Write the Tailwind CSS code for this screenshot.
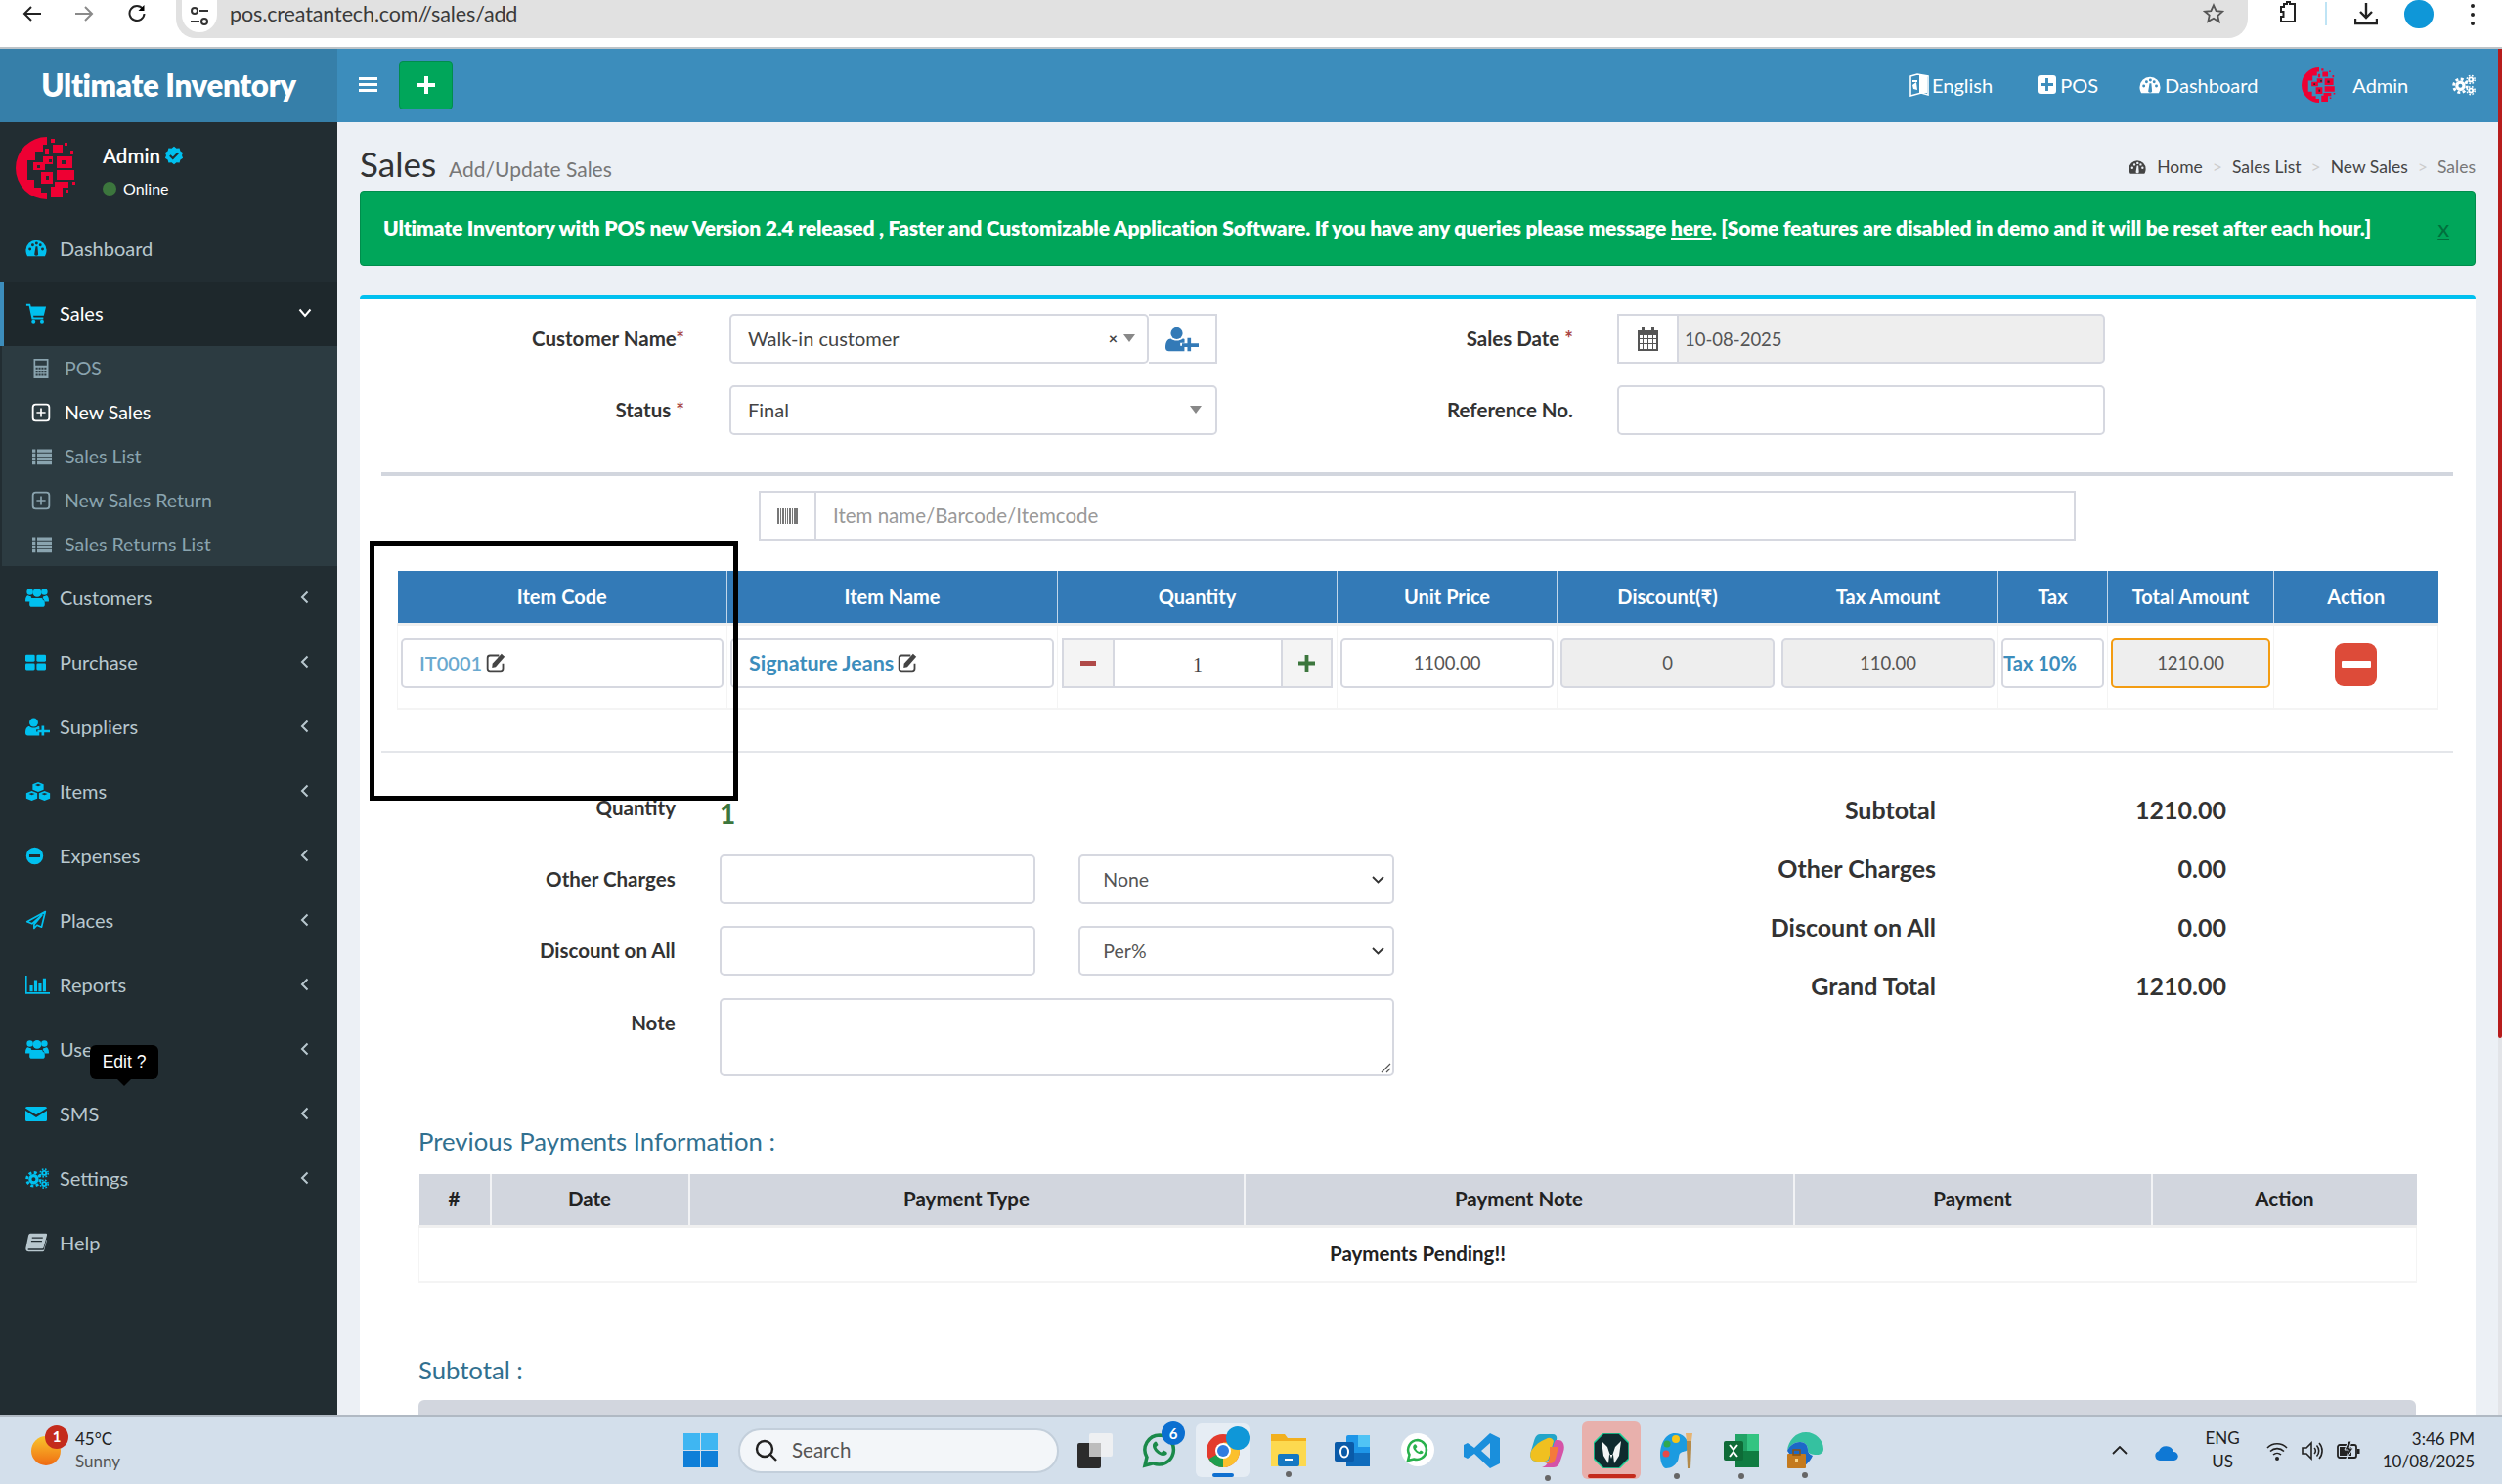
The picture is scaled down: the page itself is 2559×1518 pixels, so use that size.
<!DOCTYPE html>
<html lang="en">
<head>
<meta charset="utf-8">
<title>Sales</title>
<script src="https://cdn.jsdelivr.net/npm/@tailwindcss/browser@4"></script>
</head>
<body class="m-0 overflow-hidden bg-white font-['Lato','Noto_Sans',sans-serif] text-[#333]">
<svg class="hidden" xmlns="http://www.w3.org/2000/svg">
  <symbol id="i-dash" viewBox="0 0 24 24"><path fill-rule="evenodd" d="M12 3A11.5 11.5 0 0 0 .5 14.5c0 2.4.6 4.500 1.800 6.500h19.400c1.200-2 1.800-4.100 1.800-6.500A11.500 11.500 0 0 0 12 3zM3.500 13a1.600 1.600 0 1 0 3.200 0 1.600 1.600 0 1 0-3.200 0zM6.500 8.500a1.600 1.600 0 1 0 3.200 0 1.600 1.600 0 1 0-3.200 0zM10.800 6.500a1.600 1.600 0 1 0 3.200 0 1.600 1.600 0 1 0-3.200 0zM15 8.500a1.600 1.600 0 1 0 3.200 0 1.600 1.600 0 1 0-3.200 0zM17.500 13a1.600 1.600 0 1 0 3.200 0 1.600 1.600 0 1 0-3.200 0zM10 19a2.300 2.300 0 0 0 4.300 0L13.500 10h-2z"/></symbol>
  <symbol id="i-cart" viewBox="0 0 24 24"><path d="M1 2h4.500l.7 3H23l-2.500 10H8.800l.4 2H20v2.200H7.200L4 4.200H1z"/><circle cx="9" cy="21.500" r="2.200"/><circle cx="18.500" cy="21.500" r="2.200"/></symbol>
  <symbol id="i-calc" viewBox="0 0 24 24"><path fill-rule="evenodd" d="M3 0h18v24H3zM5 2v6h14V2zM5.500 10.500v2.500h2.500v-2.500zM9 10.500v2.500h2.500v-2.500zM12.500 10.500v2.500H15v-2.500zM16 10.500v2.500h2.500v-2.500zM5.500 14.500V17H8v-2.500zM9 14.500V17h2.500v-2.500zM12.500 14.500V17H15v-2.500zM16 14.500V17h2.500v-2.500zM5.500 18.500V21H8v-2.500zM9 18.500V21h2.500v-2.500zM12.500 18.500V21H15v-2.500zM16 18.500V21h2.500v-2.500z"/></symbol>
  <symbol id="i-plus-o" viewBox="0 0 24 24"><rect x="2" y="2" width="20" height="20" rx="3.500" fill="none" stroke="currentColor" stroke-width="2.200"/><path d="M11 6.500h2V11h4.500v2H13v4.500h-2V13H6.500v-2H11z"/></symbol>
  <symbol id="i-list" viewBox="0 0 24 24"><path d="M0 3h4v4H0zM6 3h18v4H6zM0 8h4v4H0zM6 8h18v4H6zM0 13h4v4H0zM6 13h18v4H6zM0 18h4v4H0zM6 18h18v4H6z"/></symbol>
  <symbol id="i-users" viewBox="0 0 26 22"><circle cx="5" cy="5" r="3.500"/><circle cx="21" cy="5" r="3.500"/><circle cx="13" cy="6" r="4.800"/><path d="M0 15c0-4 1.500-6 3-6 1 .8 2 1 3 1 .3 1.500 1 2.500 1.800 3C6 14 5.200 15 5 16H1.500C.5 16 0 15.600 0 15zM26 15c0-4-1.500-6-3-6-1 .8-2 1-3 1-.3 1.500-1 2.500-1.800 3 1.800 1 2.600 2 2.800 3h3.500c1 0 1.500-.4 1.500-1zM7 12h12c2 1 2.500 4 2.500 7 0 1.500-1 2.500-2.500 2.500H7c-1.500 0-2.500-1-2.500-2.500 0-3 .5-6 2.500-7z"/></symbol>
  <symbol id="i-th" viewBox="0 0 24 18"><rect x="0" y="0" width="11" height="8" rx="1.500"/><rect x="13" y="0" width="11" height="8" rx="1.500"/><rect x="0" y="10" width="11" height="8" rx="1.500"/><rect x="13" y="10" width="11" height="8" rx="1.500"/></symbol>
  <symbol id="i-userplus" viewBox="0 0 28 20"><circle cx="9.500" cy="5" r="5"/><path d="M0 17c0-5 2-7.500 4.500-7.500 1.500 1.200 3 1.700 5 1.700s3.500-.5 5-1.700c.6 0 1.100.1 1.600.4v3.100h-3.600v2.500H16V20H3c-2 0-3-1.200-3-3z"/><path d="M18.500 9h3v4.500H28v3h-6.500V20h-3v-3.500H14v-3h4.500z"/></symbol>
  <symbol id="i-cubes" viewBox="0 0 30 22"><path d="M15 0l6.500 2.600v6.500L15 11.700 8.500 9.100V2.600zM15 2.200l-3.500 1.300L15 4.900l3.500-1.400zM7.500 10.500L14 13v6.500L7.500 22 1 19.500V13zM7.500 12.700L4 14l3.500 1.400L11 14zM22.500 10.500L29 13v6.500L22.500 22 16 19.500V13zM22.500 12.700L19 14l3.500 1.400L26 14z" fill-rule="evenodd"/></symbol>
  <symbol id="i-minus" viewBox="0 0 24 24"><path fill-rule="evenodd" d="M12 1a11 11 0 1 0 0 22 11 11 0 0 0 0-22zM5 10h14v4H5z"/></symbol>
  <symbol id="i-plane" viewBox="0 0 26 24"><path d="M24 2L2 14l6 2.500L20 6 10.500 17.500v4.500l3.500-3.800 5.500 2.300z" fill="none" stroke="currentColor" stroke-width="2" stroke-linejoin="round"/></symbol>
  <symbol id="i-bars" viewBox="0 0 28 22"><path d="M0 1h1.800v19H28v2H0zM5 12h3.500v7H5zM10 6h3.500v13H10zM15 10h3.500v9H15zM20 4h3.500v15H20z"/></symbol>
  <symbol id="i-mail" viewBox="0 0 26 18"><path d="M0 2c0-1 1-2 2-2h22c1 0 2 1 2 2L13 10zM0 5l13 8 13-8v11c0 1-1 2-2 2H2c-1 0-2-1-2-2z"/></symbol>
  <symbol id="i-cogs" viewBox="0 0 30 26"><g fill="none" stroke="currentColor"><circle cx="10.500" cy="14" r="4.500" stroke-width="4"/><circle cx="10.500" cy="14" r="8.500" stroke-width="3.500" stroke-dasharray="3.700 3"/><circle cx="24" cy="6" r="2.500" stroke-width="2.400"/><circle cx="24" cy="6" r="5" stroke-width="2" stroke-dasharray="2 2"/><circle cx="24" cy="20" r="2.500" stroke-width="2.400"/><circle cx="24" cy="20" r="5" stroke-width="2" stroke-dasharray="2 2"/></g></symbol>
  <symbol id="i-book" viewBox="0 0 26 22"><path d="M6 0h19c1 0 1.300.8 1 2l-4 15c-.3 1-1 1.500-2 1.500H4c-.8 0-1.200.4-1 1 .2.500.6.800 1.500.8H21c.6 0 1-.3 1.200-.8l3.300-12 .5.500-3.500 13c-.2.600-.8 1-1.500 1H4C1.500 22 0 20 .5 17.500L3.500 3C3.800 1.200 4.800 0 6 0z"/><path fill="#222d32" d="M8 4.500h13v1.500H8zM7 8.500h13V10H7z"/></symbol>
  <symbol id="i-edit" viewBox="0 0 24 24"><path d="M16 3H5a3 3 0 0 0-3 3v13a3 3 0 0 0 3 3h13a3 3 0 0 0 3-3v-6" fill="none" stroke="currentColor" stroke-width="2.200"/><path d="M19 1l4 3.500L12 17l-4.500 1 .5-5z"/></symbol>
  <symbol id="i-avatar" viewBox="0 0 64 64"><g fill="#ee0033"><path d="M32 0A32 32 0 0 0 32 64V57H26V52H19V44H12V24H20V15H28V8H32z"/><path d="M30 12h4v6h-4zM36 2h4v4h-4zM38 8h10v9H38zM50 6h3v3h-3zM28 20h10v8H28zM42 20h16v12H42zM56 14h3v4h-3zM18 26h12v8H18zM26 36h12v12H26zM42 34h18v10H42zM40 46h14v6H40zM36 51h12v11H36zM51 54h3v3h-3zM58 46h3v3h-3z"/></g><path fill="#222d32" d="M34 23h3v3h-3zM47 24h4v4h-4zM22 29h3v3h-3zM31 40h3v4h-3z"/></symbol>
  <symbol id="i-check" viewBox="0 0 24 24"><path d="M12 1l3 2.300 3.700-.3 1 3.600 3.200 2-1.300 3.400 1.300 3.400-3.200 2-1 3.600-3.700-.3L12 23l-3-2.300-3.700.3-1-3.600-3.200-2L2.400 12 1.100 8.600l3.200-2 1-3.600L9 3.300z"/><path d="M7 12l3.500 3.500L17 9" fill="none" stroke="#222d32" stroke-width="2.500"/></symbol>
</svg>

<div class="flex h-screen w-full flex-col">
  <!-- browser bar -->
  <div class="flex h-[50px] shrink-0 items-start border-b-2 border-[#bcc3c8] bg-white">
    <svg class="ml-[23px] mt-[5px] h-[18px] w-[20px] text-[#222]" viewBox="0 0 20 18"><path d="M19 9H3M9 2L2 9l7 7" fill="none" stroke="currentColor" stroke-width="2"/></svg>
    <svg class="ml-[33px] mt-[5px] h-[18px] w-[20px] text-[#8a8a8a]" viewBox="0 0 20 18"><path d="M1 9h16M11 2l7 7-7 7" fill="none" stroke="currentColor" stroke-width="2"/></svg>
    <svg class="ml-[35px] mt-[4px] h-[20px] w-[18px] text-[#222]" viewBox="0 0 18 20"><path d="M15 5a7.500 7.500 0 1 0 1.500 5" fill="none" stroke="currentColor" stroke-width="2"/><path d="M16.500 1v6h-6z"/></svg>
    <div class="ml-[31px] flex h-[39px] w-[2119px] items-start rounded-b-[20px] bg-[#e1e1e1] pl-[6px] pr-[24px]">
      <div class="flex h-[33px] w-[36px] items-center justify-center rounded-b-full bg-white">
        <svg class="h-[22px] w-[20px]" viewBox="0 0 20 22"><g fill="none" stroke="#333" stroke-width="2"><circle cx="5" cy="5" r="3"/><circle cx="15" cy="16" r="3"/><path d="M10 5h9M1 16h9"/></g></svg>
      </div>
      <span class="ml-[13px] text-[21.500px] leading-[28px] tracking-[-.12px] text-[#3a3a3a]">pos.creatantech.com//sales/add</span>
      <svg class="ml-auto mt-[3px] h-[22px] w-[22px]" viewBox="0 0 24 24"><path d="M12 2.500l2.900 6.300 6.900.8-5.100 4.700 1.400 6.800L12 17.200l-6.100 3.400 1.400-6.800L2.200 9.600l6.900-.8z" fill="none" stroke="#555" stroke-width="2"/></svg>
    </div>
    <svg class="ml-[29px] mt-[1px] h-[24px] w-[24px]" viewBox="0 0 24 24"><path d="M8 3h3V1h3v2h5v18H5v-5h2.500v-5H5V6h3z" fill="none" stroke="#222" stroke-width="2"/></svg>
    <div class="ml-[26px] mt-[2px] h-[24px] w-[2px] bg-[#bfe4f5]"></div>
    <svg class="ml-[28px] mt-[2px] h-[24px] w-[24px]" viewBox="0 0 24 24"><path d="M12 1v15M6 10l6 6 6-6M1 17v5h22v-5" fill="none" stroke="#222" stroke-width="2.400"/></svg>
    <div class="ml-[27px] h-[29px] w-[30px] rounded-full bg-[#0f97d8]"></div>
    <div class="ml-[38px] mt-[4px] flex flex-col gap-[5px]"><i class="block h-[4px] w-[4px] rounded-full bg-[#222]"></i><i class="block h-[4px] w-[4px] rounded-full bg-[#222]"></i><i class="block h-[4px] w-[4px] rounded-full bg-[#222]"></i></div>
  </div>

  <!-- app -->
  <div class="flex min-h-0 flex-1">
    <aside class="flex w-[345px] shrink-0 flex-col bg-[#222d32] text-[20px] text-[#b8c7ce]">
      <div class="flex h-[75px] shrink-0 items-center justify-center bg-[#367fa9] text-[31.200px] font-extrabold tracking-[-.3px] text-white">Ultimate Inventory</div>
      <div class="relative flex h-[97px] shrink-0 pl-[16px] pt-[15px]">
        <svg class="h-[64px] w-[64px]"><use href="#i-avatar"/></svg>
        <div class="ml-[25px] text-white">
          <div class="mt-[6px] flex items-center gap-[4px] text-[20.500px] font-semibold leading-[26px]">Admin<svg class="h-[20px] w-[20px] text-[#00c0ef]" fill="currentColor"><use href="#i-check"/></svg></div>
          <div class="mt-[11px] flex items-center gap-[7px] text-[16px] leading-[20px]"><i class="block h-[14px] w-[14px] rounded-full bg-[#3c763d]"></i>Online</div>
        </div>
      </div>
      <div class="flex h-[66px] shrink-0 items-center pb-[2px] pl-[26px]"><svg class="h-[24px] w-[22px] text-[#00c0ef]" fill="currentColor"><use href="#i-dash"/></svg><span class="ml-[13px]">Dashboard</span></div>
      <div class="flex h-[66px] shrink-0 items-center border-l-4 border-[#3c8dbc] bg-[#1e282c] pb-[2px] pl-[22px] pr-[26px] text-white"><svg class="h-[24px] w-[22px] text-[#00c0ef]" fill="currentColor"><use href="#i-cart"/></svg><span class="ml-[13px]">Sales</span><svg class="ml-auto h-[10px] w-[14px]" viewBox="0 0 14 10"><path d="M1.500 1.500L7 8l5.500-6.500" fill="none" stroke="#fff" stroke-width="2"/></svg></div>
      <div class="flex shrink-0 flex-col border-l-2 border-[#222d32] bg-[#2c3b41] text-[19.500px] text-[#8aa4af]">
        <div class="flex h-[45px] items-center pl-[30px]"><svg class="h-[22px] w-[20px]" fill="currentColor"><use href="#i-calc"/></svg><span class="ml-[14px]">POS</span></div>
        <div class="flex h-[45px] items-center pl-[30px] text-white"><svg class="h-[20px] w-[20px]" fill="currentColor"><use href="#i-plus-o"/></svg><span class="ml-[14px]">New Sales</span></div>
        <div class="flex h-[45px] items-center pl-[30px]"><svg class="h-[20px] w-[22px]" fill="currentColor"><use href="#i-list"/></svg><span class="ml-[12px]">Sales List</span></div>
        <div class="flex h-[45px] items-center pl-[30px]"><svg class="h-[20px] w-[20px]" fill="currentColor"><use href="#i-plus-o"/></svg><span class="ml-[14px]">New Sales Return</span></div>
        <div class="flex h-[45px] items-center pl-[30px]"><svg class="h-[20px] w-[22px]" fill="currentColor"><use href="#i-list"/></svg><span class="ml-[12px]">Sales Returns List</span></div>
      </div>
      <div class="flex h-[66px] shrink-0 items-center pb-[2px] pl-[26px] pr-[29px]"><svg class="h-[22px] w-[24px] text-[#00c0ef]" fill="currentColor"><use href="#i-users"/></svg><span class="ml-[11px]">Customers</span><svg class="ml-auto h-[14px] w-[9px]" viewBox="0 0 9 14"><path d="M7.500 1.500L2 7l5.500 5.500" fill="none" stroke="#b8c7ce" stroke-width="2"/></svg></div>
      <div class="flex h-[66px] shrink-0 items-center pb-[2px] pl-[26px] pr-[29px]"><svg class="h-[17px] w-[21px] text-[#00c0ef]" fill="currentColor"><use href="#i-th"/></svg><span class="ml-[14px]">Purchase</span><svg class="ml-auto h-[14px] w-[9px]" viewBox="0 0 9 14"><path d="M7.500 1.500L2 7l5.500 5.500" fill="none" stroke="#b8c7ce" stroke-width="2"/></svg></div>
      <div class="flex h-[66px] shrink-0 items-center pb-[2px] pl-[26px] pr-[29px]"><svg class="h-[19px] w-[25px] text-[#00c0ef]" fill="currentColor"><use href="#i-userplus"/></svg><span class="ml-[10px]">Suppliers</span><svg class="ml-auto h-[14px] w-[9px]" viewBox="0 0 9 14"><path d="M7.500 1.500L2 7l5.500 5.500" fill="none" stroke="#b8c7ce" stroke-width="2"/></svg></div>
      <div class="flex h-[66px] shrink-0 items-center pb-[2px] pl-[26px] pr-[29px]"><svg class="h-[21px] w-[26px] text-[#00c0ef]" fill="currentColor"><use href="#i-cubes"/></svg><span class="ml-[9px]">Items</span><svg class="ml-auto h-[14px] w-[9px]" viewBox="0 0 9 14"><path d="M7.500 1.500L2 7l5.500 5.500" fill="none" stroke="#b8c7ce" stroke-width="2"/></svg></div>
      <div class="flex h-[66px] shrink-0 items-center pb-[2px] pl-[26px] pr-[29px]"><svg class="h-[21px] w-[19px] text-[#00c0ef]" fill="currentColor"><use href="#i-minus"/></svg><span class="ml-[16px]">Expenses</span><svg class="ml-auto h-[14px] w-[9px]" viewBox="0 0 9 14"><path d="M7.500 1.500L2 7l5.500 5.500" fill="none" stroke="#b8c7ce" stroke-width="2"/></svg></div>
      <div class="flex h-[66px] shrink-0 items-center pb-[2px] pl-[26px] pr-[29px]"><svg class="h-[22px] w-[22px] text-[#00c0ef]"><use href="#i-plane"/></svg><span class="ml-[13px]">Places</span><svg class="ml-auto h-[14px] w-[9px]" viewBox="0 0 9 14"><path d="M7.500 1.500L2 7l5.500 5.500" fill="none" stroke="#b8c7ce" stroke-width="2"/></svg></div>
      <div class="flex h-[66px] shrink-0 items-center pb-[2px] pl-[26px] pr-[29px]"><svg class="h-[20px] w-[25px] text-[#00c0ef]" fill="currentColor"><use href="#i-bars"/></svg><span class="ml-[10px]">Reports</span><svg class="ml-auto h-[14px] w-[9px]" viewBox="0 0 9 14"><path d="M7.500 1.500L2 7l5.500 5.500" fill="none" stroke="#b8c7ce" stroke-width="2"/></svg></div>
      <div class="relative flex h-[66px] shrink-0 items-center pb-[2px] pl-[26px] pr-[29px]"><svg class="h-[22px] w-[24px] text-[#00c0ef]" fill="currentColor"><use href="#i-users"/></svg><span class="ml-[11px]">Users</span><svg class="ml-auto h-[14px] w-[9px]" viewBox="0 0 9 14"><path d="M7.500 1.500L2 7l5.500 5.500" fill="none" stroke="#b8c7ce" stroke-width="2"/></svg>
        <div class="absolute left-[92px] top-[28px] flex h-[35px] w-[70px] items-center justify-center rounded-[6px] bg-black font-['Liberation_Sans',sans-serif] text-[17.500px] text-white">Edit ?<i class="absolute -bottom-[7px] left-[28px] block h-0 w-0 border-x-[7px] border-t-[7px] border-x-transparent border-t-black"></i></div>
      </div>
      <div class="flex h-[66px] shrink-0 items-center pb-[2px] pl-[26px] pr-[29px]"><svg class="h-[17px] w-[22px] text-[#00c0ef]" fill="currentColor"><use href="#i-mail"/></svg><span class="ml-[13px]">SMS</span><svg class="ml-auto h-[14px] w-[9px]" viewBox="0 0 9 14"><path d="M7.500 1.500L2 7l5.500 5.500" fill="none" stroke="#b8c7ce" stroke-width="2"/></svg></div>
      <div class="flex h-[66px] shrink-0 items-center pb-[2px] pl-[26px] pr-[29px]"><svg class="h-[21px] w-[24px] text-[#00c0ef]"><use href="#i-cogs"/></svg><span class="ml-[11px]">Settings</span><svg class="ml-auto h-[14px] w-[9px]" viewBox="0 0 9 14"><path d="M7.500 1.500L2 7l5.500 5.500" fill="none" stroke="#b8c7ce" stroke-width="2"/></svg></div>
      <div class="flex h-[66px] shrink-0 items-center pb-[2px] pl-[26px] pr-[29px]"><svg class="h-[20px] w-[22px] text-[#b8c7ce]" fill="currentColor"><use href="#i-book"/></svg><span class="ml-[13px]">Help</span></div>
    </aside>

    <div class="relative flex min-w-0 flex-1 flex-col overflow-hidden bg-[#ecf0f5]">
      <!-- navbar -->
      <header class="flex h-[75px] shrink-0 items-center bg-[#3c8dbc] pb-[2px] pl-[22px] text-[20px] text-white">
        <svg class="h-[15px] w-[19px]" viewBox="0 0 19 15"><path d="M0 0h19v3H0zM0 6h19v3H0zM0 12h19v3H0z" fill="#fff"/></svg>
        <div class="ml-[22px] flex h-[50px] w-[55px] items-center justify-center rounded-[4px] border border-[#008d4c] bg-[#00a65a]"><svg class="h-[18px] w-[18px]" viewBox="0 0 18 18"><path d="M7 0h4v7h7v4h-7v7H7v-7H0V7h7z" fill="#fff"/></svg></div>
        <svg class="ml-[1490px] h-[24px] w-[20px]" viewBox="0 0 20 24"><path d="M1 3l7-2 11 2v19l-7-2-11 3z" fill="none" stroke="#fff" stroke-width="1.600"/><path d="M10 2h8v18h-8zM3 7h5v2H3zM3 12l4-3 1 8-4-1z" fill="#fff"/></svg>
        <span class="ml-[3px]">English</span>
        <div class="ml-[46px] flex h-[19px] w-[19px] items-center justify-center rounded-[3px] bg-white"><svg class="h-[13px] w-[13px]" viewBox="0 0 18 18"><path d="M7 0h4v7h7v4h-7v7H7v-7H0V7h7z" fill="#3c8dbc"/></svg></div>
        <span class="ml-[4px]">POS</span>
        <svg class="ml-[42px] h-[24px] w-[22px]" fill="#fff"><use href="#i-dash"/></svg>
        <span class="ml-[4px]">Dashboard</span>
        <svg class="ml-[45px] h-[36px] w-[36px]"><use href="#i-avatar"/></svg>
        <span class="ml-[16px]">Admin</span>
        <svg class="ml-[45px] h-[22px] w-[24px] text-white"><use href="#i-cogs"/></svg>
      </header>

      <div class="min-h-0 flex-1 overflow-hidden pl-[23px] pr-[27px]">
        <div class="flex h-[70px] items-start justify-between">
          <div class="mt-[17px] flex items-baseline">
            <h1 class="text-[35px] font-normal leading-[50px] text-[#333]">Sales</h1>
            <span class="ml-[13px] text-[21px] text-[#777]">Add/Update Sales</span>
          </div>
          <nav class="mt-[35px] flex items-center text-[17.500px] leading-[22px] text-[#444]">
            <svg class="h-[20px] w-[18px]" fill="#444"><use href="#i-dash"/></svg>
            <span class="ml-[11px]">Home</span><span class="mx-[10px] text-[#ccc]">&gt;</span>
            <span>Sales List</span><span class="mx-[10px] text-[#ccc]">&gt;</span>
            <span>New Sales</span><span class="mx-[10px] text-[#ccc]">&gt;</span>
            <span class="text-[#777]">Sales</span>
          </nav>
        </div>

        <div class="flex h-[77px] items-center justify-between rounded-[4px] border border-[#008d4c] bg-[#00a65a] pb-[2px] pl-[23px] pr-[26px] text-[21px] font-extrabold tracking-[-.18px] text-white">
          <span class="whitespace-nowrap">Ultimate Inventory with POS new Version 2.4 released , Faster and Customizable Application Software. If you have any queries please message <u>here</u>. [Some features are disabled in demo and it will be reset after each hour.]</span>
          <span class="text-[24px] font-normal leading-[24px] text-[#00703d] underline">x</span>
        </div>

        <section class="mt-[30px] h-[1200px] rounded-t-[4px] border-t-4 border-[#00c0ef] bg-white">
          <!-- head form -->
          <div class="flex pt-[15px] text-[20px]">
            <label class="w-[332px] self-center text-right text-[20.500px] font-bold">Customer Name<span class="text-[#a94442]">*</span></label>
            <div class="ml-[46px] flex h-[51px] w-[499px]">
              <div class="flex h-full w-[429px] items-center rounded-[5px] border-2 border-[#d6d8e0] pb-[2px] pl-[17px] pr-[12px] text-[#444]"><span>Walk-in customer</span><span class="ml-auto text-[16px] font-bold">×</span><i class="ml-[6px] block h-0 w-0 border-x-[6px] border-t-[8px] border-x-transparent border-t-[#888]"></i></div>
              <div class="flex h-full w-[70px] items-center justify-center border-y-2 border-r-2 border-[#d6d8e0]"><svg class="h-[28px] w-[34px] text-[#337ab7]" fill="currentColor"><use href="#i-userplus"/></svg></div>
            </div>
            <label class="w-[364px] self-center text-right text-[20.500px] font-bold">Sales Date <span class="text-[#a94442]">*</span></label>
            <div class="ml-[45px] flex h-[51px] w-[499px]">
              <div class="flex w-[61px] items-center justify-center border-y-2 border-l-2 border-[#d6d8e0]"><svg class="h-[24px] w-[21px]" viewBox="0 0 21 24"><path fill-rule="evenodd" fill="#555" d="M0 3h4V0h3v3h7V0h3v3h4v21H0zM2 8v3h3V8zM6 8v3h4V8zM11 8v3h4V8zM16 8v3h3V8zM2 12v4h3v-4zM6 12v4h4v-4zM11 12v4h4v-4zM16 12v4h3v-4zM2 17v5h3v-5zM6 17v5h4v-5zM11 17v5h4v-5zM16 17v5h3v-5z"/></svg></div>
              <div class="flex flex-1 items-center rounded-r-[5px] border-2 border-[#d6d8e0] bg-[#eee] pl-[6px] pt-[2px] text-[18.500px] text-[#555]">10-08-2025</div>
            </div>
          </div>
          <div class="mt-[22px] flex text-[20px]">
            <label class="w-[332px] self-center text-right text-[20.500px] font-bold">Status <span class="text-[#a94442]">*</span></label>
            <div class="ml-[46px] flex h-[51px] w-[499px] items-center rounded-[5px] border-2 border-[#d6d8e0] pb-[2px] pl-[17px] pr-[14px] text-[#444]"><span>Final</span><i class="ml-auto block h-0 w-0 border-x-[6px] border-t-[8px] border-x-transparent border-t-[#888]"></i></div>
            <label class="w-[364px] self-center text-right text-[20.500px] font-bold">Reference No.</label>
            <div class="ml-[45px] h-[51px] w-[499px] rounded-[5px] border-2 border-[#d6d8e0]"></div>
          </div>
          <div class="ml-[22px] mr-[23px] mt-[38px] h-[4px] bg-[#d2d6de]"></div>

          <div class="ml-[408px] mt-[15px] flex h-[51px] w-[1347px] border-2 border-[#d6d8e0] text-[20.500px]">
            <div class="flex w-[57px] items-center justify-center border-r-2 border-[#d6d8e0]"><svg class="h-[16px] w-[21px]" viewBox="0 0 21 16"><path fill="#777" d="M0 0h2v16H0zM3 0h1v16H3zM5 0h2v16H5zM8 0h1v16H8zM10 0h1v16h-1zM12 0h2v16h-2zM15 0h1v16h-1zM17 0h4v16h-4z"/></svg></div>
            <div class="flex flex-1 items-center pl-[17px] text-[#999]">Item name/Barcode/Itemcode</div>
          </div>

          <!-- items table -->
          <table class="ml-[38px] mt-[31px] w-[2087px] table-fixed border-collapse text-[20px]">
            <colgroup><col class="w-[337px]"><col class="w-[338px]"><col class="w-[286px]"><col class="w-[225px]"><col class="w-[226px]"><col class="w-[225px]"><col class="w-[112px]"><col class="w-[170px]"><col class="w-[168px]"></colgroup>
            <thead>
              <tr class="h-[54px] border-b-[3px] border-[#f0f0f0] bg-[#337ab7] font-bold text-white">
                <th class="border-r border-white/70 p-0 text-center">Item Code</th>
                <th class="border-r border-white/70 p-0 text-center">Item Name</th>
                <th class="border-r border-white/70 p-0 text-center">Quantity</th>
                <th class="border-r border-white/70 p-0 text-center">Unit Price</th>
                <th class="border-r border-white/70 p-0 text-center">Discount(₹)</th>
                <th class="border-r border-white/70 p-0 text-center">Tax Amount</th>
                <th class="border-r border-white/70 p-0 text-center">Tax</th>
                <th class="border-r border-white/70 p-0 text-center">Total Amount</th>
                <th class="p-0 text-center">Action</th>
              </tr>
            </thead>
            <tbody>
              <tr class="h-[85px] border-b-2 border-[#f4f4f4]">
                <td class="border-x border-[#f4f4f4] px-[3px] pb-[20px] pt-[13px]"><div class="flex h-[51px] items-center gap-[4px] rounded-[5px] border-2 border-[#d6d8e0] pl-[17px] font-semibold text-[#6aa9cf]">IT0001<svg class="h-[20px] w-[20px] text-[#444]" fill="currentColor"><use href="#i-edit"/></svg></div></td>
                <td class="border-r border-[#f4f4f4] px-[3px] pb-[20px] pt-[13px]"><div class="flex h-[51px] items-center gap-[4px] rounded-[5px] border-2 border-[#d6d8e0] pl-[17px] text-[21.500px] font-bold text-[#3c8dbc]">Signature Jeans<svg class="h-[20px] w-[20px] text-[#444]" fill="currentColor"><use href="#i-edit"/></svg></div></td>
                <td class="border-r border-[#f4f4f4] px-[4px] pb-[20px] pt-[13px]"><div class="flex h-[51px]"><div class="flex w-[54px] items-center justify-center border-2 border-[#d6d8e0] bg-[#f4f4f4]"><i class="block h-[5px] w-[16px] bg-[#b04a48]"></i></div><div class="flex w-[172px] items-center justify-center border-y-2 border-[#d6d8e0] pt-[3px] font-['Liberation_Serif',serif] text-[#444]">1</div><div class="flex w-[53px] items-center justify-center border-2 border-[#d6d8e0] bg-[#f4f4f4]"><svg class="h-[17px] w-[17px]" viewBox="0 0 18 18"><path d="M7 0h4v7h7v4h-7v7H7v-7H0V7h7z" fill="#3c763d"/></svg></div></div></td>
                <td class="border-r border-[#f4f4f4] px-[3px] pb-[20px] pt-[13px]"><div class="flex h-[51px] items-center justify-center rounded-[5px] border-2 border-[#d6d8e0] pt-[2px] text-[18.500px] text-[#555]">1100.00</div></td>
                <td class="border-r border-[#f4f4f4] px-[3px] pb-[20px] pt-[13px]"><div class="flex h-[51px] items-center justify-center rounded-[5px] border-2 border-[#d6d8e0] bg-[#eee] pt-[2px] text-[18.500px] text-[#555]">0</div></td>
                <td class="border-r border-[#f4f4f4] px-[3px] pb-[20px] pt-[13px]"><div class="flex h-[51px] items-center justify-center rounded-[5px] border-2 border-[#d6d8e0] bg-[#eee] pt-[2px] text-[18.500px] text-[#555]">110.00</div></td>
                <td class="border-r border-[#f4f4f4] px-[3px] pb-[20px] pt-[13px]"><div class="flex h-[51px] items-center rounded-[5px] border-2 border-[#d6d8e0] font-bold text-[#3c8dbc]"><span class="whitespace-nowrap">Tax 10%</span></div></td>
                <td class="border-r border-[#f4f4f4] px-[3px] pb-[20px] pt-[13px]"><div class="flex h-[51px] items-center justify-center rounded-[5px] border-2 border-[#f39c12] bg-[#eee] pt-[2px] text-[18.500px] text-[#555]">1210.00</div></td>
                <td class="border-r border-[#f4f4f4] p-0 pb-[20px] pt-[16px]"><div class="mx-auto flex h-[44px] w-[43px] items-center justify-center rounded-[9px] bg-[#dd4b39]"><i class="block h-[7px] w-[30px] rounded-[1px] bg-white"></i></div></td>
              </tr>
            </tbody>
          </table>
          <div class="ml-[22px] mr-[23px] mt-[42px] h-[2px] bg-[#e4e6ea]"></div>

          <!-- totals -->
          <div class="flex">
            <div class="w-[1058px] text-[20.500px]">
              <div class="mt-[40px] flex h-[36px]"><label class="w-[323px] pt-[1px] text-right font-bold leading-[30px]">Quantity</label><span class="ml-[45px] pt-[4px] text-[28px] font-bold leading-[36px] text-[#3c763d]">1</span></div>
              <div class="mt-[28px] flex h-[51px] items-center"><label class="w-[323px] text-right font-bold">Other Charges</label><div class="ml-[45px] h-full w-[324px] rounded-[5px] border-2 border-[#d6d8e0]"></div><div class="ml-[44px] flex h-full w-[323px] items-center justify-between rounded-[5px] border-2 border-[#d6d8e0] pl-[23px] pr-[8px] pt-[1px] text-[19.500px] text-[#555]">None<svg class="h-[8px] w-[13px]" viewBox="0 0 13 8"><path d="M1 1l5.500 5.500L12 1" fill="none" stroke="#333" stroke-width="1.800"/></svg></div></div>
              <div class="mt-[22px] flex h-[51px] items-center"><label class="w-[323px] text-right font-bold">Discount on All</label><div class="ml-[45px] h-full w-[324px] rounded-[5px] border-2 border-[#d6d8e0]"></div><div class="ml-[44px] flex h-full w-[323px] items-center justify-between rounded-[5px] border-2 border-[#d6d8e0] pl-[23px] pr-[8px] pt-[1px] text-[19.500px] text-[#555]">Per%<svg class="h-[8px] w-[13px]" viewBox="0 0 13 8"><path d="M1 1l5.500 5.500L12 1" fill="none" stroke="#333" stroke-width="1.800"/></svg></div></div>
              <div class="mt-[23px] flex h-[80px]"><label class="w-[323px] pt-[10px] text-right font-bold">Note</label><div class="relative ml-[45px] h-full w-[691px] rounded-[5px] border-2 border-[#d6d8e0]"><svg class="absolute bottom-[1px] right-[1px] h-[12px] w-[12px]" viewBox="0 0 12 12"><path d="M11 2L2 11M11 7l-4 4" stroke="#555" stroke-width="1.200"/></svg></div></div>
            </div>
            <div class="pt-[28px] text-[25px] font-bold leading-[60px]">
              <div class="flex"><span class="w-[554px] text-right">Subtotal</span><span class="w-[297px] text-right">1210.00</span></div>
              <div class="flex"><span class="w-[554px] text-right">Other Charges</span><span class="w-[297px] text-right">0.00</span></div>
              <div class="flex"><span class="w-[554px] text-right">Discount on All</span><span class="w-[297px] text-right">0.00</span></div>
              <div class="flex"><span class="w-[554px] text-right">Grand Total</span><span class="w-[297px] text-right">1210.00</span></div>
            </div>
          </div>

          <div class="ml-[60px] mt-[48px] h-[36px] text-[25.700px] leading-[36px] text-[#31708f]">Previous Payments Information :</div>
          <table class="ml-[60px] mt-[16px] w-[2043px] table-fixed border-collapse text-[20.500px]">
            <colgroup><col class="w-[73px]"><col class="w-[203px]"><col class="w-[568px]"><col class="w-[562px]"><col class="w-[366px]"><col class="w-[271px]"></colgroup>
            <thead><tr class="h-[54px] border-b-[3px] border-[#f0f0f0] bg-[#d2d6de] font-bold text-[#222]">
              <th class="border-r-2 border-white/70 p-0">#</th><th class="border-r-2 border-white/70 p-0">Date</th><th class="border-r-2 border-white/70 p-0">Payment Type</th><th class="border-r-2 border-white/70 p-0">Payment Note</th><th class="border-r-2 border-white/70 p-0">Payment</th><th class="p-0">Action</th>
            </tr></thead>
            <tbody><tr class="h-[56px] border-x border-b-2 border-[#f4f4f4]"><td colspan="6" class="p-0 text-center font-bold text-[#222]">Payments Pending!!</td></tr></tbody>
          </table>

          <div class="ml-[60px] mt-[71px] h-[36px] text-[25.700px] leading-[36px] text-[#31708f]">Subtotal :</div>
          <div class="ml-[60px] mt-[13px] h-[60px] w-[2043px] rounded-t-[6px] bg-[#d2d6de]"></div>
        </section>
      </div>

      <!-- scrollbar and annotation overlays -->
      <div class="absolute right-0 top-0 h-[1012px] w-[4px] rounded-b-[3px] bg-[#b71c1c]"></div>
      <div class="absolute right-0 top-[1012px] bottom-0 w-[4px] bg-[#e2e4e8]"></div>
      <div class="absolute left-[33px] top-[503px] h-[266px] w-[377px] border-[5px] border-black"></div>
    </div>
  </div>

  <!-- taskbar -->
  <footer class="flex h-[71px] shrink-0 items-center border-t-2 border-[#b0b9c3] bg-[#d3dfeb] text-[#222]">
    <div class="relative ml-[32px] h-[30px] w-[30px] rounded-full bg-gradient-to-b from-[#f7c42c] to-[#ee6a12]"><span class="absolute -top-[11px] left-[14px] flex h-[24px] w-[24px] items-center justify-center rounded-full bg-[#c42b1c] text-[15px] font-bold text-white">1</span></div>
    <div class="ml-[15px] w-[59px] pb-[2px] text-[17px] leading-[23px]"><div>45°C</div><div class="text-[#555]">Sunny</div></div>
    <svg class="ml-[563px] h-[35px] w-[35px]" viewBox="0 0 35 35"><path fill="#3fb6f2" d="M0 0h17v17H0zM18 0h17v17H18z"/><path fill="#0f7fd8" d="M0 18h17v17H0zM18 18h17v17H18z"/></svg>
    <div class="ml-[21px] flex h-[46px] w-[328px] items-center rounded-full border-2 border-[#c3cfdb] bg-[#f3f6f9] pl-[15px] text-[20.500px] text-[#555]"><svg class="h-[23px] w-[23px]" viewBox="0 0 23 23"><circle cx="10" cy="10" r="8" fill="none" stroke="#222" stroke-width="2.400"/><path d="M15.500 15.500L22 22" stroke="#222" stroke-width="2.400"/></svg><span class="ml-[15px]">Search</span></div>
    <svg class="ml-[19px] h-[36px] w-[36px]" viewBox="0 0 36 36"><rect x="12" y="0" width="24" height="24" rx="2" fill="#eef0f2"/><rect x="0" y="10" width="24" height="26" rx="2" fill="#2b2b2b"/><rect x="12" y="10" width="12" height="14" fill="#bdbdbd"/></svg>
    <div class="relative ml-[30px] h-[37px] w-[37px]"><svg class="h-[37px] w-[37px]" viewBox="0 0 37 37"><path d="M18 3a15 15 0 0 0-13 22.500L3 34l8.500-2.200A15 15 0 1 0 18 3z" fill="none" stroke="#1a8a4a" stroke-width="3.500"/><path d="M12 11c-2 2-1 6 2.500 9.500S22 25 25 23c1-1 1-2 0-3l-3-1.500-2 2c-2-.5-5-3.500-5.500-5.500l2-2L15 10c-1-1-2-.5-3 1z" fill="#1a8a4a"/></svg><span class="absolute -top-[11px] left-[20px] flex h-[24px] w-[24px] items-center justify-center rounded-full bg-[#0b6fd0] text-[15px] font-bold text-white">6</span></div>
    <div class="relative ml-[18px] flex h-[55px] w-[55px] items-center justify-center rounded-[6px] bg-[#e6edf4]"><svg class="h-[36px] w-[36px]" viewBox="0 0 36 36"><circle cx="18" cy="18" r="17" fill="#e33b2e"/><path d="M18 18L3.300 26.500A17 17 0 0 0 18 35z" fill="#1f9d4d"/><path d="M18 18v17A17 17 0 0 0 32.700 9.500H18z" fill="#fbc02d"/><circle cx="18" cy="18" r="8" fill="#fff"/><circle cx="18" cy="18" r="6" fill="#2f7de1"/></svg><span class="absolute right-0 top-[3px] h-[24px] w-[24px] rounded-full bg-[#0f97d8]"></span><span class="absolute bottom-[0px] left-[17px] h-[4px] w-[22px] rounded-full bg-[#0f6fd0]"></span></div>
    <div class="relative ml-[22px] h-[33px] w-[36px]"><svg class="h-[33px] w-[36px]" viewBox="0 0 36 33"><path d="M0 0h14l3 4h19v29H0z" fill="#f2b01e"/><path d="M0 7h36v26H0z" fill="#fdd94f"/><rect x="7" y="20" width="22" height="13" rx="2" fill="#1578c2"/><rect x="14" y="25" width="8" height="2" fill="#fff"/></svg><span class="absolute -bottom-[11px] left-[15px] h-[6px] w-[6px] rounded-full bg-[#666]"></span></div>
    <svg class="ml-[29px] h-[36px] w-[36px]" viewBox="0 0 36 36"><rect x="12" y="2" width="24" height="32" rx="2" fill="#1e96e8"/><rect x="24" y="2" width="12" height="12" fill="#50c4f5"/><path d="M12 20h24v14H12z" fill="#0f6cbd"/><rect x="0" y="9" width="20" height="20" rx="2" fill="#0a5aa8"/><ellipse cx="10" cy="19" rx="4" ry="5.500" fill="none" stroke="#fff" stroke-width="2"/></svg>
    <svg class="ml-[31px] h-[36px] w-[36px]" viewBox="0 0 36 36"><circle cx="18" cy="17" r="17" fill="#fff"/><path d="M18 7a10 10 0 0 0-8.500 15L8 28l6-1.500A10 10 0 1 0 18 7z" fill="none" stroke="#28b14c" stroke-width="2.500"/><path d="M14 12c-1.500 1.500-1 4 1.500 6.500S21 22 23 20.500c.7-.7.7-1.500 0-2l-2-1-1.500 1.500c-1.500-.3-3-2-3.500-3.500l1.500-1.500-1-2c-.7-.7-1.500-1-2.500 0z" fill="#28b14c"/></svg>
    <svg class="ml-[29px] h-[36px] w-[37px]" viewBox="0 0 37 36"><path d="M27 0l10 5v26l-10 5L11 21l-7 5-4-2V12l4-2 7 5zM27 10l-9 8 9 8z" fill="#1a8fdc" fill-rule="evenodd"/></svg>
    <div class="relative ml-[31px] h-[36px] w-[35px]"><svg class="h-[36px] w-[35px]" viewBox="0 0 35 36"><path d="M10 1h13c5 0 5 5 3 9l-4 13c-2 5-4 6-8 6H7c-6 0-8-5-6-11l3-10c1-4 3-7 6-7z" fill="#22a5c9"/><path d="M1 18c-2 6 0 11 6 11h7c2 0 4-1 5-3L24 8C22 4 19 4 16 6 10 8 5 12 1 18z" fill="#f0c020"/><path d="M26 7h3c5 0 7 6 5 12l-3 9c-1 4-3 7-7 7H11c3 0 6-2 8-7l3-9c1-4 2-9 4-12z" fill="#d553a7"/><path d="M20 14h9l-3 12c-1 3-3 5-6 5h-6c3 0 5-2 6-6z" fill="#f57a3c"/></svg><span class="absolute -bottom-[13px] left-[15px] h-[6px] w-[6px] rounded-full bg-[#666]"></span></div>
    <div class="relative ml-[18px] flex h-[59px] w-[60px] items-center justify-center rounded-[6px] bg-[#e8b0ac]"><svg class="h-[36px] w-[36px]" viewBox="0 0 36 36"><path d="M10 0h16l10 10v16L26 36H10L0 26V10z" fill="#0f2b2e" stroke="#1fd39a" stroke-width="1.500"/><path d="M8 8l6 6 4 12 4-12 6-6-2 15-5 8-1-9h-4l-1 9-5-8z" fill="#f2f6f5"/><path d="M17 12h2l1 6h-4z" fill="#0f2b2e"/></svg><span class="absolute bottom-[1px] left-[6px] h-[4px] w-[49px] rounded-full bg-[#c42b1c]"></span></div>
    <div class="relative ml-[20px] h-[36px] w-[34px]"><svg class="h-[36px] w-[34px]" viewBox="0 0 34 36"><path d="M15 0c8 0 14 6 14 14 0 5-5 4-8 6s-1 6-4 10c-2 3-6 6-11 6C3 36 0 30 0 22 0 10 6 0 15 0z" fill="#1c9be0"/><circle cx="16" cy="6" r="4" fill="#f5c518"/><circle cx="7" cy="11" r="3.500" fill="#2fa84f"/><circle cx="6" cy="21" r="3.500" fill="#e64a4a"/><path d="M27 6h5v8l-1 22h-3l-1-22z" fill="#b38a4a"/><path d="M26 0h7l-1 8h-5z" fill="#e6b370"/></svg><span class="absolute -bottom-[11px] left-[14px] h-[6px] w-[6px] rounded-full bg-[#666]"></span></div>
    <div class="relative ml-[31px] h-[36px] w-[36px]"><svg class="h-[36px] w-[36px]" viewBox="0 0 36 36"><path d="M12 1h22c1 0 2 1 2 2v30c0 1-1 2-2 2H12z" fill="#21a366"/><path d="M24 1h12v17H24z" fill="#33c481"/><path d="M12 18h24v17H12z" fill="#107c41"/><rect x="0" y="8" width="20" height="20" rx="2" fill="#0e6b37"/><path d="M6 12l4 5 4-5M6 24l4-5 4 5" fill="none" stroke="#fff" stroke-width="2"/></svg><span class="absolute -bottom-[11px] left-[15px] h-[6px] w-[6px] rounded-full bg-[#666]"></span></div>
    <div class="relative ml-[29px] h-[37px] w-[37px]"><svg class="h-[37px] w-[37px]" viewBox="0 0 37 37"><path d="M19 0c10 0 18 8 18 17 0 4-3 6-7 6-5 0-9-1-9-5 0-5-3-8-8-8-6 0-11 4-13 9C1 8 9 0 19 0z" fill="#35c1a0"/><path d="M0 19c2-5 7-9 13-9 5 0 8 3 8 8 0 3 2 5 5 6-3 7-9 12-14 12z" fill="#1c69c7"/><rect x="0" y="22" width="19" height="15" rx="1" fill="#c47a1e"/><rect x="6" y="18" width="7" height="5" fill="none" stroke="#8a5312" stroke-width="1.500"/><rect x="8" y="27" width="3" height="3" fill="#f8d488"/></svg><span class="absolute -bottom-[10px] left-[15px] h-[6px] w-[6px] rounded-full bg-[#666]"></span></div>
    <svg class="ml-[295px] h-[9px] w-[16px]" viewBox="0 0 16 9"><path d="M1 8l7-7 7 7" fill="none" stroke="#222" stroke-width="1.800"/></svg>
    <svg class="ml-[28px] h-[20px] w-[24px]" viewBox="0 0 24 20"><path d="M5 20a5 5 0 0 1-1-9.800 8 8 0 0 1 15 .8A4.500 4.500 0 0 1 19.500 20z" fill="#0f78d4"/></svg>
    <div class="ml-[20px] w-[50px] pb-[2px] text-center text-[17px] leading-[24px]"><div>ENG</div><div>US</div></div>
    <svg class="ml-[20px] h-[22px] w-[22px]" viewBox="0 0 22 22"><g fill="none" stroke="#222" stroke-width="1.600"><path d="M1 8a14 14 0 0 1 20 0M4 11.500a10 10 0 0 1 14 0M7 15a6 6 0 0 1 8 0"/></g><circle cx="11" cy="19" r="2" fill="#222"/></svg>
    <svg class="ml-[14px] h-[22px] w-[22px]" viewBox="0 0 22 22"><g fill="none" stroke="#222" stroke-width="1.600"><path d="M1 8h4l5-5v16l-5-5H1zM13 8a4 4 0 0 1 0 6M15.500 5.500a8 8 0 0 1 0 11M18 3a12 12 0 0 1 0 16"/></g></svg>
    <svg class="ml-[14px] h-[20px] w-[24px]" viewBox="0 0 24 20"><rect x="1" y="4" width="19" height="13" rx="2" fill="none" stroke="#222" stroke-width="1.800"/><rect x="21" y="8" width="2.500" height="5" fill="#222"/><rect x="3" y="6" width="12" height="9" fill="#222"/><path d="M12 0L8 9h4l-2 9 7-11h-4l2-7z" fill="#222" stroke="#d3dfeb"/></svg>
    <div class="ml-[17px] w-[100px] pb-[2px] text-right text-[17px] leading-[23px]"><div>3:46 PM</div><div>10/08/2025</div></div>
  </footer>
</div>
</body>
</html>
